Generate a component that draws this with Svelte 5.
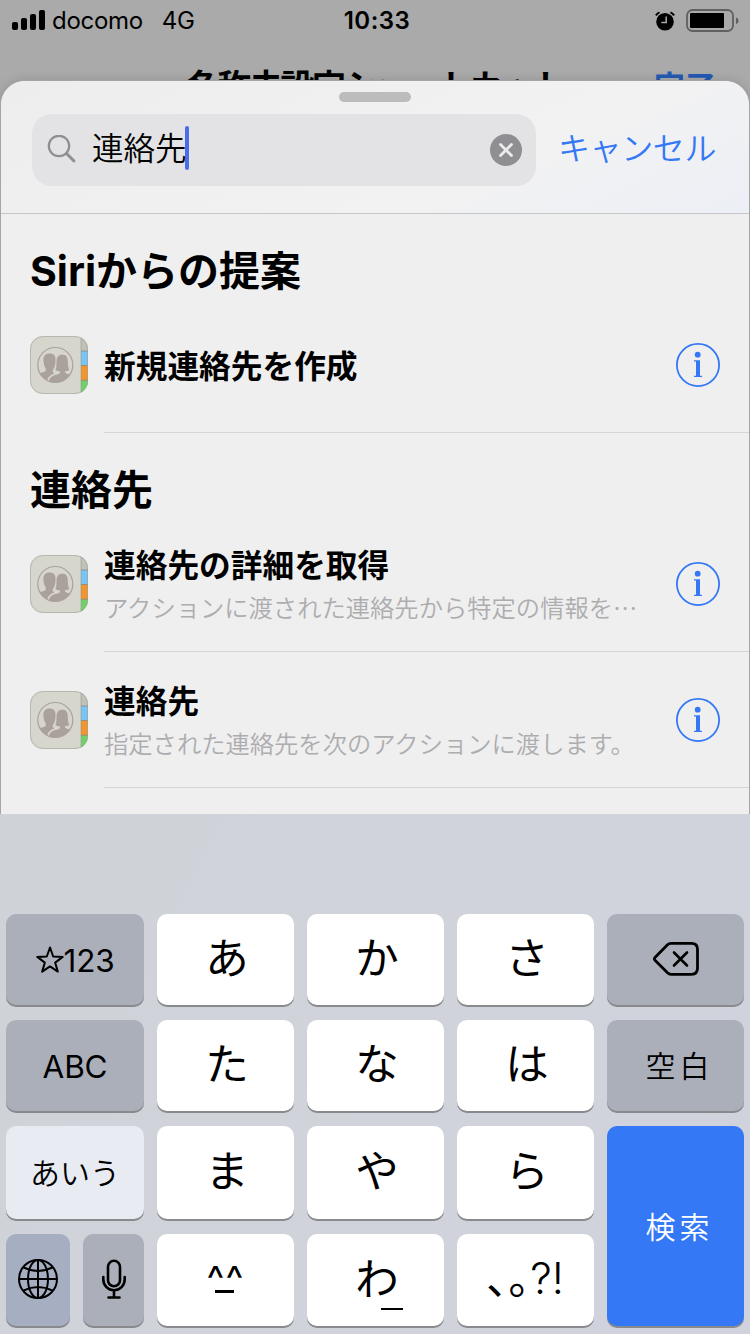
<script lang="ts">
	interface Action {
		title: string;
		detail?: string;
	}

	interface Section {
		heading: string;
		actions: Action[];
	}

	const sections: Section[] = [
		{ heading: 'Siriからの提案', actions: [{ title: '新規連絡先を作成' }] },
		{
			heading: '連絡先',
			actions: [
				{ title: '連絡先の詳細を取得', detail: 'アクションに渡された連絡先から特定の情報を⋯' },
				{ title: '連絡先', detail: '指定された連絡先を次のアクションに渡します。' }
			]
		}
	];

	const signal = [8, 12, 16, 20];
	let query = $state('連絡先');
</script>

{#snippet kana(label: string)}
	<button class="key kana"><span>{label}</span></button>
{/snippet}

<div class="screen">
	<div class="status-bar">
		<div class="carrier">
			<div class="signal">
				{#each signal as height}
					<i style="height: {height}px"></i>
				{/each}
			</div>
			<span>docomo</span>
			<span class="network">4G</span>
		</div>
		<div class="time">10:33</div>
		<div class="indicators">
			<svg width="20" height="20" viewBox="0 0 20 20">
				<circle cx="10" cy="10.7" r="8.8" />
				<path d="M.9 4.4A8 8 0 0 1 4.5 1.3M15.5 1.3A8 8 0 0 1 19.1 4.4" fill="none" stroke="#000" stroke-width="2" />
				<path d="M11.2 5.5v6H6.4" fill="none" stroke="#aaa" stroke-width="1.5" />
			</svg>
			<svg width="54" height="24" viewBox="0 0 54 24">
				<rect x="1" y="1" width="46" height="21" rx="5.5" fill="none" stroke="#606060" stroke-width="1.8" />
				<rect x="4" y="4" width="34" height="15" rx="1" />
				<path d="M50 8.5c3.3 1.2 3.3 5.4 0 6.6z" fill="#606060" />
			</svg>
		</div>
	</div>

	<div class="nav-bar">
		<span class="nav-title">名称未設定ショートカット</span>
		<span class="nav-done">完了</span>
	</div>

	<div class="sheet">
		<div class="sheet-header">
			<div class="grabber"></div>
			<div class="search-row">
				<div class="search-field">
					<svg class="magnifier" width="30" height="30" viewBox="0 0 30 30">
						<circle cx="12" cy="11" r="10.2" />
						<path d="M19.5 18.5 27 26" />
					</svg>
					<span class="query">{query}</span>
					<span class="caret"></span>
					<button class="clear" aria-label="消去" onclick={() => (query = '')}>
						<svg width="32" height="32" viewBox="0 0 32 32">
							<circle cx="16" cy="16" r="16" fill="#8e8e93" />
							<path d="M10.5 10.5l11 11m0-11l-11 11" stroke="#ececed" stroke-width="2.8" stroke-linecap="round" />
						</svg>
					</button>
				</div>
				<button class="cancel">キャンセル</button>
			</div>
		</div>

		{#each sections as section}
			<h2>{section.heading}</h2>
			{#each section.actions as action}
				<div class="row">
					<svg width="58" height="58" viewBox="0 0 58 58">
						<defs>
							<clipPath id="book"><rect width="58" height="58" rx="13" /></clipPath>
							<clipPath id="badge"><circle cx="25.3" cy="29" r="17.5" /></clipPath>
						</defs>
						<g clip-path="url(#book)">
							<rect width="58" height="58" fill="#d6d6cd" />
							<rect x="51" width="7" height="15" fill="#c2c1b9" />
							<rect x="51" y="15" width="7" height="14.5" fill="#78c4f3" />
							<rect x="51" y="29.5" width="7" height="15" fill="#ef962f" />
							<rect x="51" y="44.5" width="7" height="14" fill="#6fd16b" />
							<path d="M51 15h7M51 29.5h7M51 44.3h7" stroke="#777" stroke-opacity=".6" />
							<path d="M51 0v58" stroke="#918f87" stroke-opacity=".5" />
						</g>
						<rect x=".5" y=".5" width="57" height="57" rx="12.5" fill="none" stroke="#9f9f9b" stroke-opacity=".55" />
						<g clip-path="url(#badge)" fill="#aaa19b">
							<path d="M19.5 17.4c4.2 0 6.2 2.2 6 6.6 0 2.5-.2 4.5-.8 6.5-.5 1.7-1.2 2.7-1.9 3.5v2c.3 1.3 2.2 1.8 3.7 2.3L23 48H5V38.5c2-1.2 5-1.6 8-2.3 1.8-.4 2.8-.9 2.8-2.2v-1.5c-1.4-1.8-2.3-4.8-2.4-8.500 0-4.200 2-6.600 6.100-6.600z" />
							<path d="M17.6 48c0-5.2 2.4-8.4 7.4-9.900 2.500-.8 4-1 4-2" fill="none" stroke="#d6d6cd" stroke-width="1.8" />
							<path d="M32 18.8c4.2-.9 5.7 2.6 5.8 6.3.1 3.5.2 6.5 1.400 8.900-1.200.8-2.600 1.200-4.200 1.200v1c.2 1.700 5 1.600 9.300 4v8.500H18.500c0-5 2-8 6.500-9.500 2.500-.8 4.800-1.200 5-2.500v-1.500c-1.800 0-3.400-.3-4.600-1.200 1.300-2.600 1-5.500 1.100-8.800.1-4.200 2.100-6.400 5.500-6.400z" />
						</g>
						<circle cx="25.3" cy="29" r="17.5" fill="none" stroke="#aaa19b" stroke-width="1.2" />
					</svg>
					<div class="row-body">
						<div class="texts">
							<div class="title">{action.title}</div>
							{#if action.detail}
								<div class="detail">{action.detail}</div>
							{/if}
						</div>
						<button class="info" aria-label="情報">
							<svg width="44" height="44" viewBox="0 0 44 44">
								<circle cx="22" cy="22" r="21.1" fill="none" stroke="#3478f6" stroke-width="1.8" />
								<circle cx="21.7" cy="11.7" r="2.9" fill="#3478f6" />
								<path d="M18 17.2h6v15.5h2V34h-8v-1.3h2V18.5h-2z" fill="#3478f6" />
							</svg>
						</button>
					</div>
				</div>
			{/each}
		{/each}
	</div>

	<div class="keyboard">
		<button class="key dark latin">
			<svg width="28" height="28" viewBox="0 0 28 28">
				<path d="M14 1.5l3.2 9 9.5.4-7.5 5.7 2.6 9-7.8-5.2-7.800 5.200 2.600-9-7.500-5.700 9.500-.4z" fill="none" stroke="#000" stroke-width="2" stroke-linejoin="round" />
			</svg>
			<span>123</span>
		</button>
		{@render kana('あ')}
		{@render kana('か')}
		{@render kana('さ')}
		<button class="key dark" aria-label="削除">
			<svg class="delete" width="48" height="36" viewBox="0 0 48 36">
				<path d="M19 2.3h20.5q6 0 6 6v19q0 6-6 6H19q-2 0-3.5-1.5L3 19.2q-1.2-1.4 0-2.8L15.5 3.8Q17 2.3 19 2.3z" fill="none" stroke="#000" stroke-width="2.8" />
				<path d="M22 11.5l13 13m0-13l-13 13" stroke="#000" stroke-width="2.6" stroke-linecap="round" />
			</svg>
		</button>

		<button class="key dark latin"><span>ABC</span></button>
		{@render kana('た')}
		{@render kana('な')}
		{@render kana('は')}
		<button class="key dark word"><span>空白</span></button>

		<button class="key mode"><span>あいう</span></button>
		{@render kana('ま')}
		{@render kana('や')}
		{@render kana('ら')}
		<button class="key search word"><span>検索</span></button>

		<div class="split">
			<button class="key globe" aria-label="次のキーボード">
				<svg width="42" height="42" viewBox="0 0 42 42" fill="none" stroke="#000" stroke-width="2">
					<circle cx="21" cy="21" r="19" />
					<ellipse cx="21" cy="21" rx="10" ry="19" />
					<path d="M21 2v38M2 21h38M6.5 9.5q14.5 7 29 0M6.5 32.5q14.5-7 29 0" />
				</svg>
			</button>
			<button class="key dark mic" aria-label="音声入力">
				<svg width="26" height="42" viewBox="0 0 26 42" fill="none" stroke="#000" stroke-width="2.6" stroke-linecap="round">
					<rect x="7" y="2.8" width="12" height="25.5" rx="6" />
					<path d="M2.3 19v2.5a10.7 10.7 0 0 0 21.4 0V19M13 32.5v7M7.5 39.5h11" />
				</svg>
			</button>
		</div>
		<button class="key face">
			<span>^^</span>
			<i class="bar"></i>
		</button>
		<button class="key kana wa">
			<span>わ</span>
			<i class="bar"></i>
		</button>
		<button class="key marks"><span class="cjk">､｡</span><span>?!</span></button>
	</div>
</div>

<style>
	:global(body) {
		margin: 0;
	}

	.screen {
		width: 750px;
		height: 1334px;
		display: flex;
		flex-direction: column;
		overflow: hidden;
		background: #aaa;
		color: #000;
		font-family: Inter, 'Noto Sans CJK JP', sans-serif;
	}

	button {
		padding: 0;
		border: 0;
		background: none;
		color: inherit;
		font-family: inherit;
	}

	svg {
		display: block;
		flex: none;
	}

	.status-bar {
		height: 40px;
		flex: none;
		display: grid;
		grid-template-columns: 1fr auto 1fr;
		align-items: center;
		padding: 2px 10px 0 12px;
		box-sizing: border-box;
		font-size: 24px;
		line-height: 38px;
	}

	.carrier {
		display: flex;
		align-items: center;
		letter-spacing: -0.3px;
	}

	.signal {
		display: flex;
		align-items: flex-end;
		gap: 3px;
		height: 20px;
		margin: -2px 7px 0 0;
	}

	.signal i {
		width: 6px;
		border-radius: 2px;
		background: #000;
	}

	.network {
		margin-left: 19px;
	}

	.time {
		margin-left: 2px;
		font-weight: 600;
		letter-spacing: 0.5px;
	}

	.indicators {
		display: flex;
		justify-content: flex-end;
		align-items: center;
		gap: 11px;
	}

	.nav-bar {
		position: relative;
		height: 41px;
		flex: none;
		font-size: 34px;
		line-height: 50px;
		font-weight: 700;
		text-align: center;
		padding-top: 22px;
		box-sizing: border-box;
	}

	.nav-title {
		letter-spacing: -2.5px;
	}

	.nav-done {
		position: absolute;
		right: 34px;
		font-size: 31px;
		color: #2459b4;
	}

	.sheet {
		position: relative;
		height: 733px;
		flex: none;
		margin: 0 1px;
		border-radius: 24px 24px 0 0;
		background: #efefef;
		box-shadow: 0 0 0 1px #a5a5a6, 0 0 12px rgba(0, 0, 0, 0.16);
		overflow: hidden;
	}

	.sheet-header {
		height: 133px;
		box-sizing: border-box;
		padding-top: 11px;
		border-bottom: 1px solid #c5c6c9;
		background: linear-gradient(155deg, #ededee, #f2f2f2 65%, #eceff6);
	}

	.grabber {
		width: 72px;
		height: 10px;
		margin: 0 auto;
		border-radius: 5px;
		background: #bcbcbc;
	}

	.search-row {
		display: flex;
		align-items: center;
		gap: 22px;
		margin: 12px 0 0 31px;
	}

	.search-field {
		width: 504px;
		height: 72px;
		display: flex;
		align-items: center;
		box-sizing: border-box;
		padding: 0 14px 0 15px;
		border-radius: 20px;
		background: #e3e3e5;
	}

	.magnifier {
		fill: none;
		stroke: #8e8e93;
		stroke-width: 2.2;
		stroke-linecap: round;
	}

	.magnifier path {
		stroke-width: 3;
	}

	.query {
		margin: -2px 0 0 15px;
		font-size: 31.5px;
		line-height: 72px;
		font-weight: 350;
	}

	.caret {
		width: 4px;
		height: 44px;
		margin: -4px 0 0 -2px;
		border-radius: 2px;
		background: #4a6ce8;
	}

	.clear {
		margin-left: auto;
	}

	.cancel {
		margin-top: -2px;
		font-size: 32px;
		line-height: 72px;
		font-weight: 350;
		letter-spacing: -0.4px;
		color: #3478f6;
	}

	h2 {
		height: 83px;
		box-sizing: border-box;
		margin: 0;
		padding: 27px 0 0 29px;
		font-size: 41px;
		line-height: 60px;
		font-weight: 700;
	}

	.row {
		height: 136px;
		display: flex;
		align-items: center;
		padding-left: 29px;
	}

	.row-body {
		flex: 1;
		height: 136px;
		display: flex;
		align-items: center;
		justify-content: space-between;
		box-sizing: border-box;
		margin-left: 16px;
		padding-right: 29px;
		border-bottom: 1px solid #d5d6da;
	}

	.texts {
		padding-top: 4px;
	}

	.title {
		font-size: 31.7px;
		line-height: 44px;
		font-weight: 700;
	}

	.detail {
		font-size: 24.3px;
		line-height: 40px;
		font-weight: 350;
		color: #adadaf;
	}

	.keyboard {
		position: relative;
		flex: 1;
		display: grid;
		grid-template-columns: 138px repeat(4, 137px);
		grid-template-rows: 91px 91px 93px 92px;
		column-gap: 13px;
		row-gap: 15px;
		padding: 100px 6px 8px;
		background: linear-gradient(115deg, #cfd3d8, #d0d3da 45%, #d0d3dd);
	}

	.key {
		position: relative;
		display: flex;
		align-items: center;
		justify-content: center;
		border-radius: 10px;
		background: #fff;
		box-shadow: 0 2px 0 #898a8d;
		white-space: nowrap;
	}

	.dark {
		background: #abafba;
	}

	.delete {
		margin-top: -2px;
	}

	.mode {
		background: #e8ebf1;
		font-size: 30px;
		font-weight: 350;
	}

	.mode span {
		margin-top: -4px;
	}

	.kana {
		font-size: 43.5px;
		line-height: 60px;
	}

	.kana span {
		margin: -3px 0 0 3px;
	}

	.latin {
		font-size: 31.5px;
		letter-spacing: -0.2px;
	}

	.latin span {
		margin-top: 1px;
	}

	.word {
		font-size: 30px;
		font-weight: 350;
		letter-spacing: 4px;
	}

	.word span {
		margin: -3px 0 0 8px;
	}

	.search {
		grid-column: 5;
		grid-row: 3 / span 2;
		background: #3478f6;
		color: #fff;
	}

	.split {
		display: flex;
		gap: 13px;
	}

	.globe {
		width: 64px;
		background: #a5afc1;
	}

	.mic {
		width: 61px;
	}

	.split svg {
		margin-top: -2px;
	}

	.bar {
		position: absolute;
		background: #000;
	}

	.face {
		font-size: 38px;
		font-weight: 400;
		letter-spacing: 1px;
	}

	.face span {
		margin-top: -3px;
	}

	.face .bar {
		left: 58px;
		top: 56px;
		width: 19px;
		height: 3px;
	}

	.wa .bar {
		left: 74px;
		top: 74px;
		width: 22px;
		height: 2px;
	}

	.marks {
		font-size: 43px;
		line-height: 60px;
		font-weight: 350;
	}

	.marks span {
		margin-top: -4px;
	}

	.marks .cjk {
		margin-top: -11px;
		font-family: 'Noto Sans CJK JP', sans-serif;
		font-weight: 400;
	}
</style>
